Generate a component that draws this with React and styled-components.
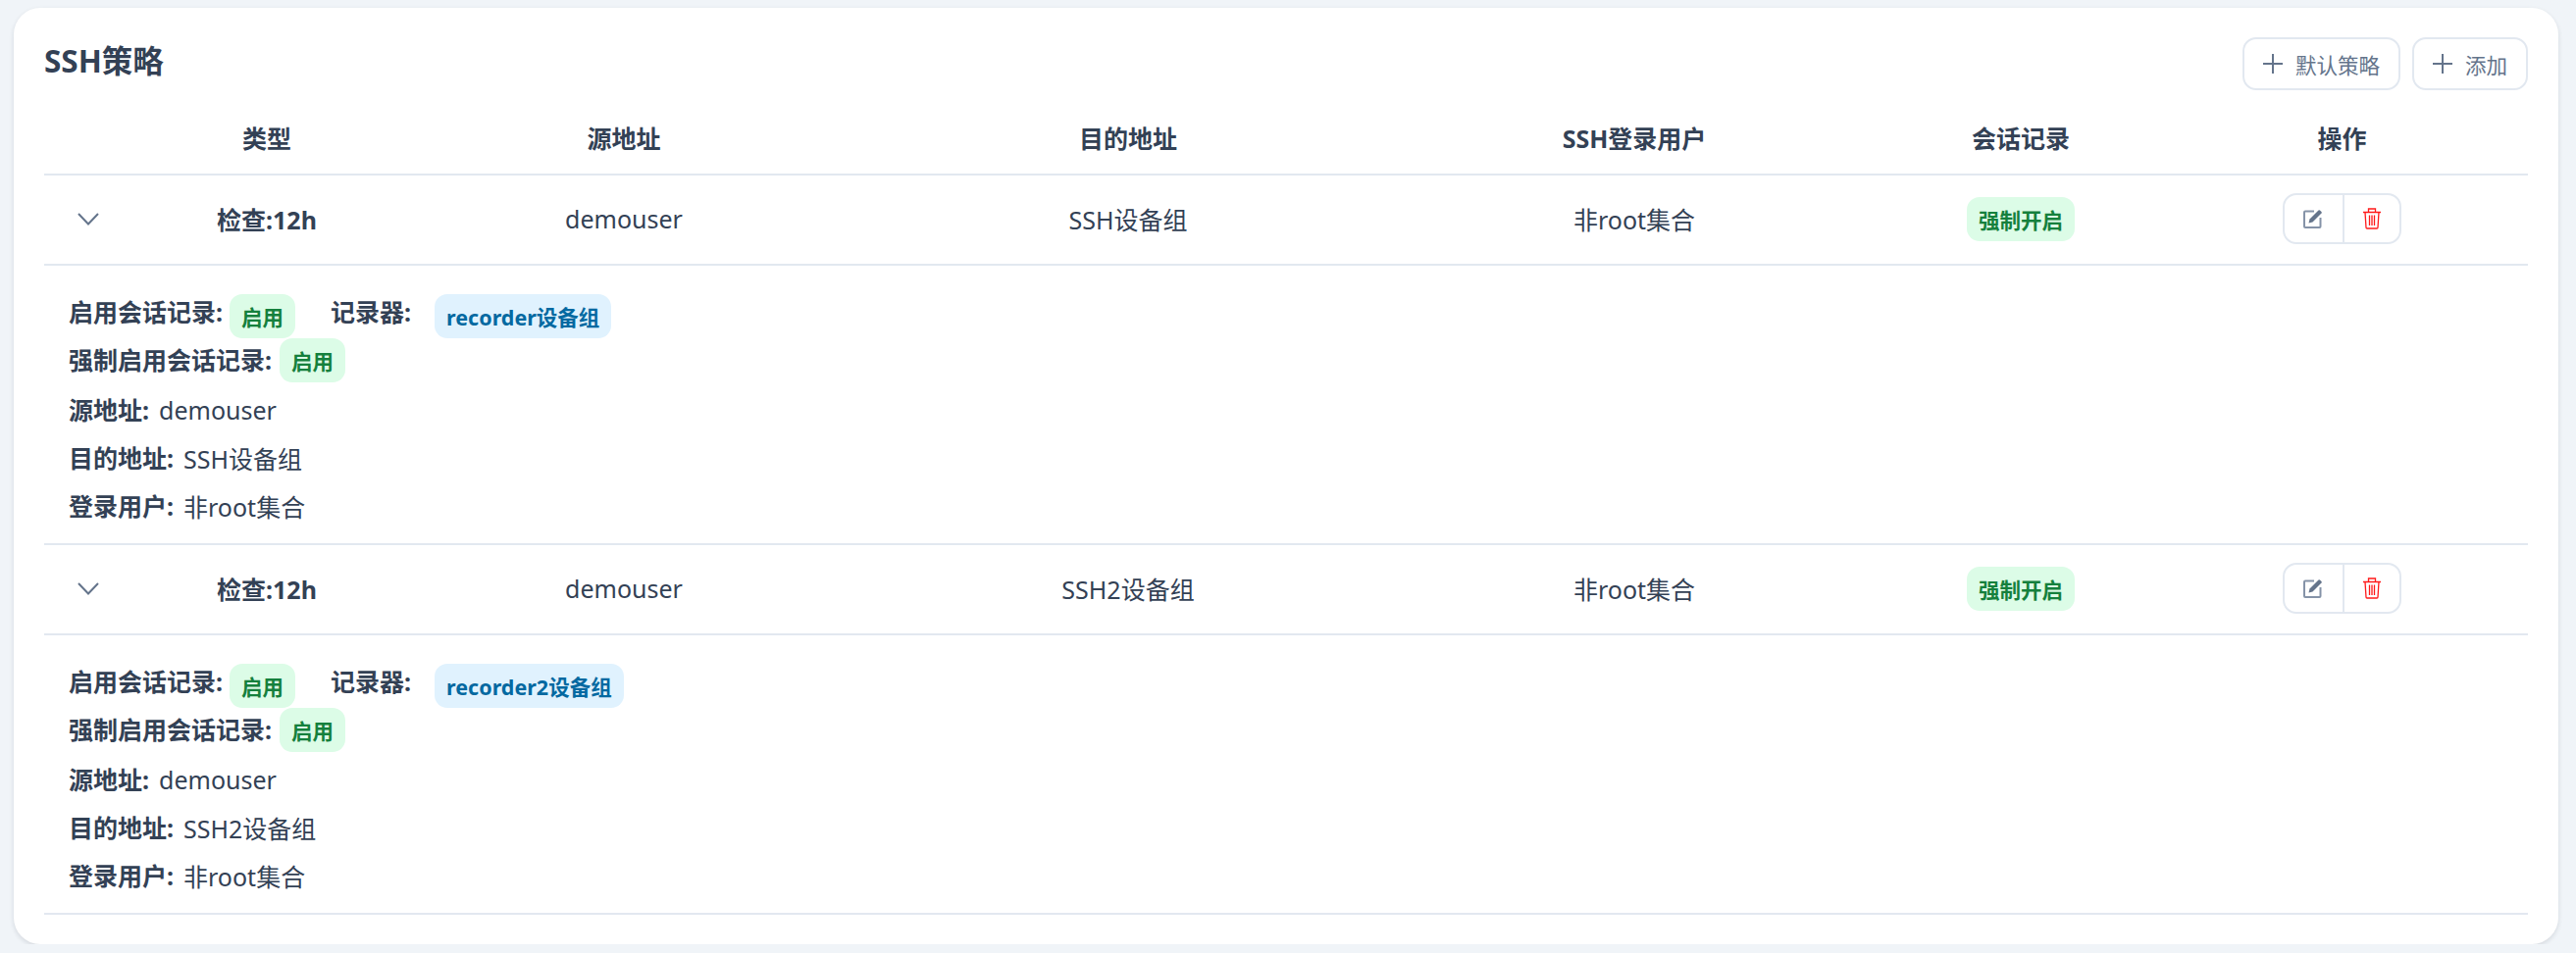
import React from 'react'
import styled, { createGlobalStyle } from 'styled-components'

const GlobalStyle = createGlobalStyle`
  html, body {
    margin: 0;
    background: #f0f4f8;
  }
  body {
    font-family: "Noto Sans", "Noto Sans CJK SC", sans-serif;
    color: #334155;
    font-size: 25px;
  }
`

const COLUMNS = '117px 220px 508px 520px 512px 276px 379px'

const Card = styled.div`
  margin: 8px 18px 0 14px;
  padding: 30px 31px 30px;
  background: #fff;
  border-radius: 27px;
  box-shadow: 0 2px 5px rgba(15, 23, 42, 0.12);
`

const TitleBar = styled.div`
  display: flex;
  justify-content: space-between;
  align-items: center;
  height: 54px;
  margin-bottom: 12px;
`

const Title = styled.h2`
  margin: 0 0 7px;
  font-size: 31.5px;
  font-weight: 700;
  line-height: 40px;
`

const Toolbar = styled.div`
  display: flex;
  gap: 12px;
`

const ToolButton = styled.button`
  display: flex;
  align-items: center;
  gap: 13px;
  height: 54px;
  padding: 0 19px;
  background: #fff;
  border: 2px solid #e2e8f0;
  border-radius: 14px;
  font-family: inherit;
  font-size: 21.5px;
  color: #64748b;
`

const Row = styled.div`
  display: grid;
  grid-template-columns: ${COLUMNS};
  align-items: center;
  height: ${props => props.$height}px;
  padding-bottom: 2px;
  box-sizing: border-box;
  border-bottom: 2px solid #e2e8f0;
`

const HeadCell = styled.div`
  text-align: center;
  font-weight: 700;
`

const Cell = styled.div`
  display: flex;
  justify-content: center;
  font-weight: ${props => (props.$bold ? 700 : 400)};
`

const Expander = styled.div`
  display: flex;
  padding-left: 34px;
  color: #64748b;
`

const Tag = styled.span`
  display: inline-flex;
  align-items: center;
  height: 45px;
  padding: 0 12px;
  border-radius: 13px;
  font-size: 21.5px;
  font-weight: 700;
  background: ${props => (props.$blue ? '#e0f2fe' : '#dcfce7')};
  color: ${props => (props.$blue ? '#0369a1' : '#15803d')};
`

const ActionGroup = styled.div`
  display: flex;
  height: 52px;
  box-sizing: border-box;
  border: 2px solid #e2e8f0;
  border-radius: 14px;
`

const ActionButton = styled.button`
  display: flex;
  align-items: center;
  justify-content: center;
  width: 58.5px;
  padding: 0;
  background: none;
  border: 0;
  & + & {
    border-left: 2px solid #e2e8f0;
  }
`

const Detail = styled.div`
  box-sizing: border-box;
  height: 285px;
  padding: 29px 0 0 25px;
  border-bottom: 2px solid #e2e8f0;
`

const TagLine = styled.div`
  display: flex;
  align-items: ${props => props.$align};
  height: ${props => props.$height}px;
`

const Label = styled.b`
  font-weight: 700;
  line-height: 36px;
  margin-right: ${props => props.$gap}px;
`

const TagSpacer = styled.span`
  width: 36px;
`

const InfoList = styled.div`
  margin-top: 4px;
`

const InfoLine = styled.div`
  display: flex;
  align-items: center;
  gap: 10px;
  height: 49px;
`

const PlusIcon = () => (
  <svg width="20" height="20" viewBox="0 0 20 20" fill="none" stroke="#64748b" strokeWidth="2">
    <path d="M0 10H20M10 0V20" />
  </svg>
)

const ChevronIcon = () => (
  <svg width="22" height="13" viewBox="0 0 22 13" fill="none" stroke="currentColor" strokeWidth="2">
    <path d="M1 1l10 10.5L21 1" />
  </svg>
)

const EditIcon = () => (
  <svg width="20" height="20" viewBox="0 0 20 20">
    <path d="M11 2.5H2a1 1 0 0 0-1 1V18a1 1 0 0 0 1 1h14.5a1 1 0 0 0 1-1V9" fill="none" stroke="#8593a8" strokeWidth="2" />
    <path d="M5.5 14.5l1-4L15.5 1.5a1 1 0 0 1 1.4 0l1.6 1.6a1 1 0 0 1 0 1.4L9.5 13.5z" fill="#64748b" />
  </svg>
)

const TrashIcon = () => (
  <svg width="20" height="22" viewBox="0 0 20 22" fill="none" stroke="#ff1a1a" strokeWidth="1.3">
    <path d="M1 4.5H19M6.5 4.5V1h7v3.5M3 4.5l1 15.5a1 1 0 0 0 1 1h10a1 1 0 0 0 1-1l1-15.5" />
    <path d="M7.5 7.5V18M10 7.5V18M12.5 7.5V18" />
  </svg>
)

const policies = [
  { dest: 'SSH设备组', recorder: 'recorder设备组' },
  { dest: 'SSH2设备组', recorder: 'recorder2设备组' },
]

const heads = ['', '类型', '源地址', '目的地址', 'SSH登录用户', '会话记录', '操作']

const Policy = ({ dest, recorder }) => (
  <>
    <Row $height={92}>
      <Expander><ChevronIcon /></Expander>
      <Cell $bold>检查:12h</Cell>
      <Cell>demouser</Cell>
      <Cell>{dest}</Cell>
      <Cell>非root集合</Cell>
      <Cell><Tag>强制开启</Tag></Cell>
      <Cell>
        <ActionGroup>
          <ActionButton><EditIcon /></ActionButton>
          <ActionButton><TrashIcon /></ActionButton>
        </ActionGroup>
      </Cell>
    </Row>
    <Detail>
      <TagLine $height={45} $align="flex-start">
        <Label $gap={7}>启用会话记录:</Label>
        <Tag>启用</Tag>
        <TagSpacer />
        <Label $gap={24}>记录器:</Label>
        <Tag $blue>{recorder}</Tag>
      </TagLine>
      <TagLine $height={44} $align="center">
        <Label $gap={8}>强制启用会话记录:</Label>
        <Tag>启用</Tag>
      </TagLine>
      <InfoList>
        <InfoLine><Label>源地址:</Label>demouser</InfoLine>
        <InfoLine><Label>目的地址:</Label>{dest}</InfoLine>
        <InfoLine><Label>登录用户:</Label>非root集合</InfoLine>
      </InfoList>
    </Detail>
  </>
)

export default function App() {
  return (
    <>
      <GlobalStyle />
      <Card>
        <TitleBar>
          <Title>SSH策略</Title>
          <Toolbar>
            <ToolButton><PlusIcon />默认策略</ToolButton>
            <ToolButton><PlusIcon />添加</ToolButton>
          </Toolbar>
        </TitleBar>
        <Row $height={75}>
          {heads.map(h => <HeadCell key={h}>{h}</HeadCell>)}
        </Row>
        {policies.map(p => <Policy key={p.dest} {...p} />)}
      </Card>
    </>
  )
}
